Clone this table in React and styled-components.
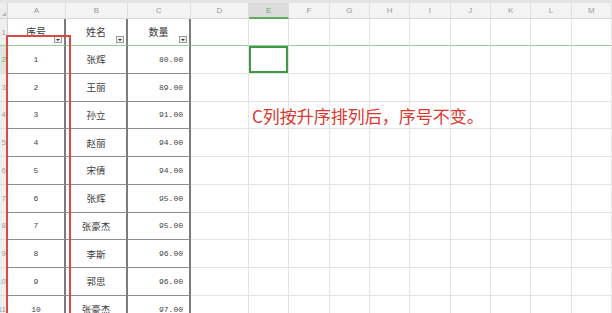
import React from "react";
import styled, { createGlobalStyle, css } from "styled-components";

const GlobalStyle = createGlobalStyle`
  html, body {
    margin: 0;
    padding: 0;
    background: #ffffff;
  }
  body {
    font-family: "Noto Sans CJK SC", "Noto Sans", sans-serif;
  }
`;

const letters = ["A", "B", "C", "D", "E", "F", "G", "H", "I", "J", "K", "L", "M"];

const rows = [
  { no: 1, name: "张辉", qty: "80.00" },
  { no: 2, name: "王丽", qty: "89.00" },
  { no: 3, name: "孙立", qty: "91.00" },
  { no: 4, name: "赵丽", qty: "94.00" },
  { no: 5, name: "宋倩", qty: "94.00" },
  { no: 6, name: "张辉", qty: "95.00" },
  { no: 7, name: "张豪杰", qty: "95.00" },
  { no: 8, name: "李斯", qty: "96.00" },
  { no: 9, name: "郭思", qty: "96.00" },
  { no: 10, name: "张豪杰", qty: "97.00" },
];

const Screen = styled.div`
  position: relative;
  width: 612px;
  height: 313px;
  overflow: hidden;
  background: #fff;
`;

const TopStrip = styled.div`
  height: 3px;
  background: #e4e4e4;
`;

const Sheet = styled.div`
  display: grid;
  grid-template-columns: 8px 58px 62px 63px 58px repeat(9, 40.33px);
  grid-template-rows: 16px 27px repeat(10, 27.75px);
`;

const Corner = styled.div`
  position: relative;
  background: #ececec;
  border-right: 1px solid #d4d4d4;
  border-bottom: 1px solid #d4d4d4;
  box-sizing: border-box;

  &::after {
    content: "";
    position: absolute;
    right: 1px;
    bottom: 2px;
    border-left: 4px solid transparent;
    border-bottom: 4px solid #b4b4b4;
  }
`;

const ColHead = styled.div`
  box-sizing: border-box;
  display: flex;
  align-items: center;
  justify-content: center;
  font-family: "Liberation Sans", Arial, sans-serif;
  font-size: 8px;
  color: #9a9a9a;
  background: ${(p) => (p.$active ? "#dcdcdc" : "#f3f3f3")};
  border-right: 1px solid #dedede;
  border-bottom: ${(p) => (p.$active ? "2px solid #5fae62" : "1px solid #d8d8d8")};
  color: ${(p) => (p.$active ? "#5fa862" : "#9a9a9a")};
`;

const RowHead = styled.div`
  box-sizing: border-box;
  overflow: hidden;
  display: flex;
  align-items: center;
  justify-content: flex-end;
  padding-right: 1px;
  font-family: "Liberation Sans", Arial, sans-serif;
  font-size: 8px;
  white-space: nowrap;
  background: ${(p) => (p.$active ? "#dfe6df" : "#efefef")};
  color: ${(p) => (p.$active ? "#6aab6a" : "#a0a0a0")};
  border-right: 1px solid #d0d0d0;
  border-bottom: ${(p) => (p.$freeze ? "1px solid #9ccc9c" : "1px solid #dcdcdc")};
`;

const tableBorders = css`
  border-right: 2px solid #7b7b7b;
  border-bottom: 1px solid #8e8e8e;
`;

const Cell = styled.div`
  position: relative;
  box-sizing: border-box;
  display: flex;
  align-items: center;
  justify-content: ${(p) => (p.$align === "right" ? "flex-end" : p.$align === "left" ? "flex-start" : "center")};
  padding: ${(p) => (p.$align === "right" ? "0 6px 0 0" : "0")};
  font-size: 9.5px;
  color: #3c3c3c;
  white-space: nowrap;
  border-right: 1px solid #e4e4e4;
  border-bottom: 1px solid #e4e4e4;
  ${(p) => p.$table && tableBorders}
  ${(p) => p.$freeze && css`border-bottom: 1px solid #9ccc9c;`}
  ${(p) =>
    p.$selected &&
    css`
      box-shadow: inset 0 0 0 2px #3f9a45;
    `}
`;

const HeadLabel = styled.span`
  font-size: 10px;
  color: #3a3a3a;
  margin-top: -2px;
`;

const Number = styled.span`
  font-family: "Liberation Mono", "DejaVu Sans Mono", monospace;
  font-size: 8px;
  color: #444;
`;

const FilterBtn = styled.span`
  position: absolute;
  right: 2px;
  bottom: 2px;
  width: 8px;
  height: 7px;
  box-sizing: border-box;
  border: 1px solid #9c9c9c;
  background: #eeeeee;
  display: flex;
  align-items: center;
  justify-content: center;

  &::after {
    content: "";
    border-left: 2px solid transparent;
    border-right: 2px solid transparent;
    border-top: 2px solid #333;
  }
`;

const Note = styled.span`
  position: relative;
  left: 3px;
  top: 1px;
  font-size: 17px;
  color: #d8392f;
  white-space: nowrap;
  overflow: visible;
  z-index: 2;
`;

const RedFrame = styled.div`
  position: absolute;
  left: 6px;
  top: 35px;
  width: 65px;
  height: 320px;
  box-sizing: border-box;
  border: 2px solid #d94a43;
  pointer-events: none;
`;

function EmptyCells({ row, freeze }) {
  return letters.slice(3).map((l) => (
    <Cell
      key={l + row}
      $freeze={freeze}
      $selected={l === "E" && row === 2}
      $align={l === "E" && row === 4 ? "left" : "center"}
    >
      {l === "E" && row === 4 && <Note>C列按升序排列后，序号不变。</Note>}
    </Cell>
  ));
}

export default function App() {
  return (
    <Screen>
      <GlobalStyle />
      <TopStrip />
      <Sheet>
        <Corner />
        {letters.map((l) => (
          <ColHead key={l} $active={l === "E"}>
            {l}
          </ColHead>
        ))}

        <RowHead $freeze>1</RowHead>
        <Cell $table $freeze>
          <HeadLabel>序号</HeadLabel>
          <FilterBtn />
        </Cell>
        <Cell $table $freeze>
          <HeadLabel>姓名</HeadLabel>
          <FilterBtn />
        </Cell>
        <Cell $table $freeze>
          <HeadLabel>数量</HeadLabel>
          <FilterBtn />
        </Cell>
        <EmptyCells row={1} freeze />

        {rows.map((r, i) => (
          <React.Fragment key={r.no}>
            <RowHead $active={i === 0}>{i + 2}</RowHead>
            <Cell $table>
              <Number>{r.no}</Number>
            </Cell>
            <Cell $table>{r.name}</Cell>
            <Cell $table $align="right">
              <Number>{r.qty}</Number>
            </Cell>
            <EmptyCells row={i + 2} />
          </React.Fragment>
        ))}
      </Sheet>
      <RedFrame />
    </Screen>
  );
}
